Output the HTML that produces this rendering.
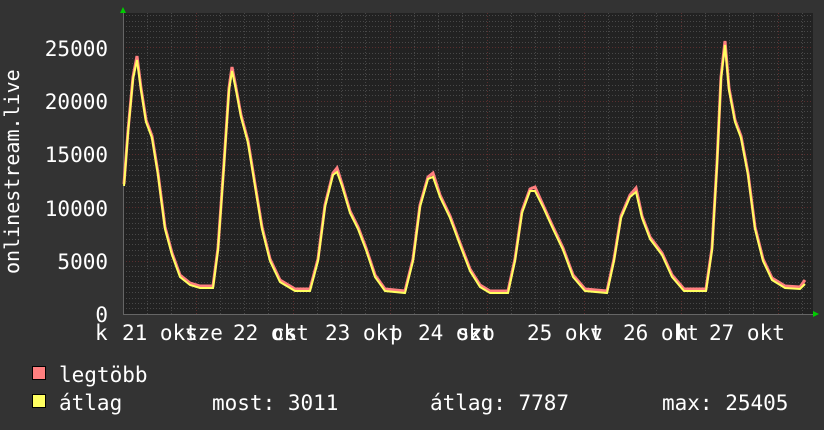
<!DOCTYPE html>
<html><head><meta charset="utf-8"><style>
html,body{margin:0;padding:0;background:#333;}
svg{display:block}
text{font-family:"DejaVu Sans Mono","Liberation Mono",monospace;fill:#fff;font-size:21px}
</style></head><body>
<svg width="824" height="430" viewBox="0 0 824 430" xmlns="http://www.w3.org/2000/svg">
<rect width="824" height="430" fill="#333"/>
<rect x="123" y="13" width="690" height="301" fill="#222"/>
<g stroke="#484848" stroke-width="1" stroke-dasharray="1,2">
<path d="M123 308.5H813M123 303.5H813M123 298.5H813M123 292.5H813M123 287.5H813M123 282.5H813M123 276.5H813M123 271.5H813M123 266.5H813"/>
<path d="M123 255.5H813M123 250.5H813M123 244.5H813M123 239.5H813M123 234.5H813M123 228.5H813M123 223.5H813M123 218.5H813M123 213.5H813"/>
<path d="M123 202.5H813M123 197.5H813M123 191.5H813M123 186.5H813M123 181.5H813M123 175.5H813M123 170.5H813M123 165.5H813M123 159.5H813"/>
<path d="M123 149.5H813M123 143.5H813M123 138.5H813M123 133.5H813M123 127.5H813M123 122.5H813M123 117.5H813M123 111.5H813M123 106.5H813"/>
<path d="M123 95.5H813M123 90.5H813M123 85.5H813M123 79.5H813M123 74.5H813M123 69.5H813M123 63.5H813M123 58.5H813M123 53.5H813"/>
<path d="M123 42.5H813M123 37.5H813M123 31.5H813M123 26.5H813M123 21.5H813M123 15.5H813"/>
<path d="M147.5 13V314M171.5 13V314M220.5 13V314M244.5 13V314M268.5 13V314M317.5 13V314M341.5 13V314M365.5 13V314M414.5 13V314M438.5 13V314M462.5 13V314M511.5 13V314M535.5 13V314M559.5 13V314M608.5 13V314M632.5 13V314M656.5 13V314M705.5 13V314M729.5 13V314M753.5 13V314M802.5 13V314"/>
</g>
<g stroke="#5a2e2e" stroke-width="1" stroke-dasharray="1,2">
<path d="M123 261.5H813M123 207.5H813M123 154.5H813M123 101.5H813M123 47.5H813"/>
<path d="M196.5 13V314M293.5 13V314M390.5 13V314M487.5 13V314M584.5 13V314M681.5 13V314M778.5 13V314"/>
</g>
<path d="M123 314.5H816M123.5 10V314" stroke="#666" stroke-width="1"/>
<polygon points="120,13 126,13 123,7" fill="#0c0"/>
<polygon points="813,311 813,317 819,314" fill="#0c0"/>
<polyline fill="none" stroke="#ff7f7f" stroke-width="3" transform="translate(0,-2)" points="124,186 128,133 133,79 137,58 141,90 146,122 152,138 158,175 165,229 172,255 180,277 190,285 200,288 213,288 218,250 224,165 229,90 232,69 236,90 241,117 248,143 255,186 262,229 270,261 280,282 295,291 310,291 318,261 325,207 333,175 337,170 342,186 350,213 358,229 366,250 375,277 385,291 405,293 413,261 420,207 428,179 433,175 440,197 450,218 460,245 470,271 480,287 490,293 508,293 515,261 522,213 530,191 535,189 543,207 553,229 563,250 573,277 585,291 607,293 614,261 621,218 630,197 636,190 642,218 650,239 662,255 672,277 684,291 706,291 712,250 717,165 721,79 725,43 729,90 735,122 741,138 748,175 755,229 763,261 772,280 785,288 800,289 805,282"/>
<polyline fill="none" stroke="#ffff60" stroke-width="2" points="124,186 128,133 133,79 137,60 141,90 146,122 152,138 158,175 165,229 172,255 180,277 190,285 200,288 213,288 218,250 224,165 229,90 232,71 236,90 241,117 248,143 255,186 262,229 270,261 280,282 295,291 310,291 318,261 325,207 333,175 337,172 342,186 350,213 358,229 366,250 375,277 385,291 405,293 413,261 420,207 428,179 433,177 440,197 450,218 460,245 470,271 480,287 490,293 508,293 515,261 522,213 530,191 535,191 543,207 553,229 563,250 573,277 585,291 607,293 614,261 621,218 630,197 636,192 642,218 650,239 662,255 672,277 684,291 706,291 712,250 717,165 721,79 725,45 729,90 735,122 741,138 748,175 755,229 763,261 772,280 785,288 800,289 805,284"/>
<g text-anchor="end" style="font-size:20px">
<text x="108" y="56">25000</text>
<text x="108" y="109">20000</text>
<text x="108" y="162">15000</text>
<text x="108" y="216">10000</text>
<text x="108" y="269">5000</text>
<text x="108" y="322">0</text>
</g>
<text transform="translate(19,274) rotate(-90)" style="font-size:20px">onlinestream.live</text>
<g style="font-size:21px">
<text x="95" y="340">k</text>
<text x="122" y="340">21 okt</text><text x="185" y="340">sze</text>
<text x="233" y="340">22 okt</text><text x="272" y="340">cs</text>
<text x="325" y="340">23 okt</text><text x="390" y="340">p</text>
<text x="418" y="340">24 okt</text><text x="457" y="340">szo</text>
<text x="527" y="340">25 okt</text><text x="590" y="340">v</text>
<text x="623" y="340">26 okt</text><text x="676" y="340">h</text>
<text x="709" y="340">27 okt</text>
</g>
<rect x="32.5" y="366.5" width="13" height="13" fill="#ff7f7f" stroke="#000"/>
<rect x="32.5" y="394.5" width="13" height="13" fill="#ffff60" stroke="#000"/>
<text x="59" y="382">legtöbb</text>
<text x="59" y="410">átlag</text>
<text x="212" y="410">most: 3011</text>
<text x="430" y="410">átlag: 7787</text>
<text x="662" y="410">max: 25405</text>
</svg>
</body></html>
